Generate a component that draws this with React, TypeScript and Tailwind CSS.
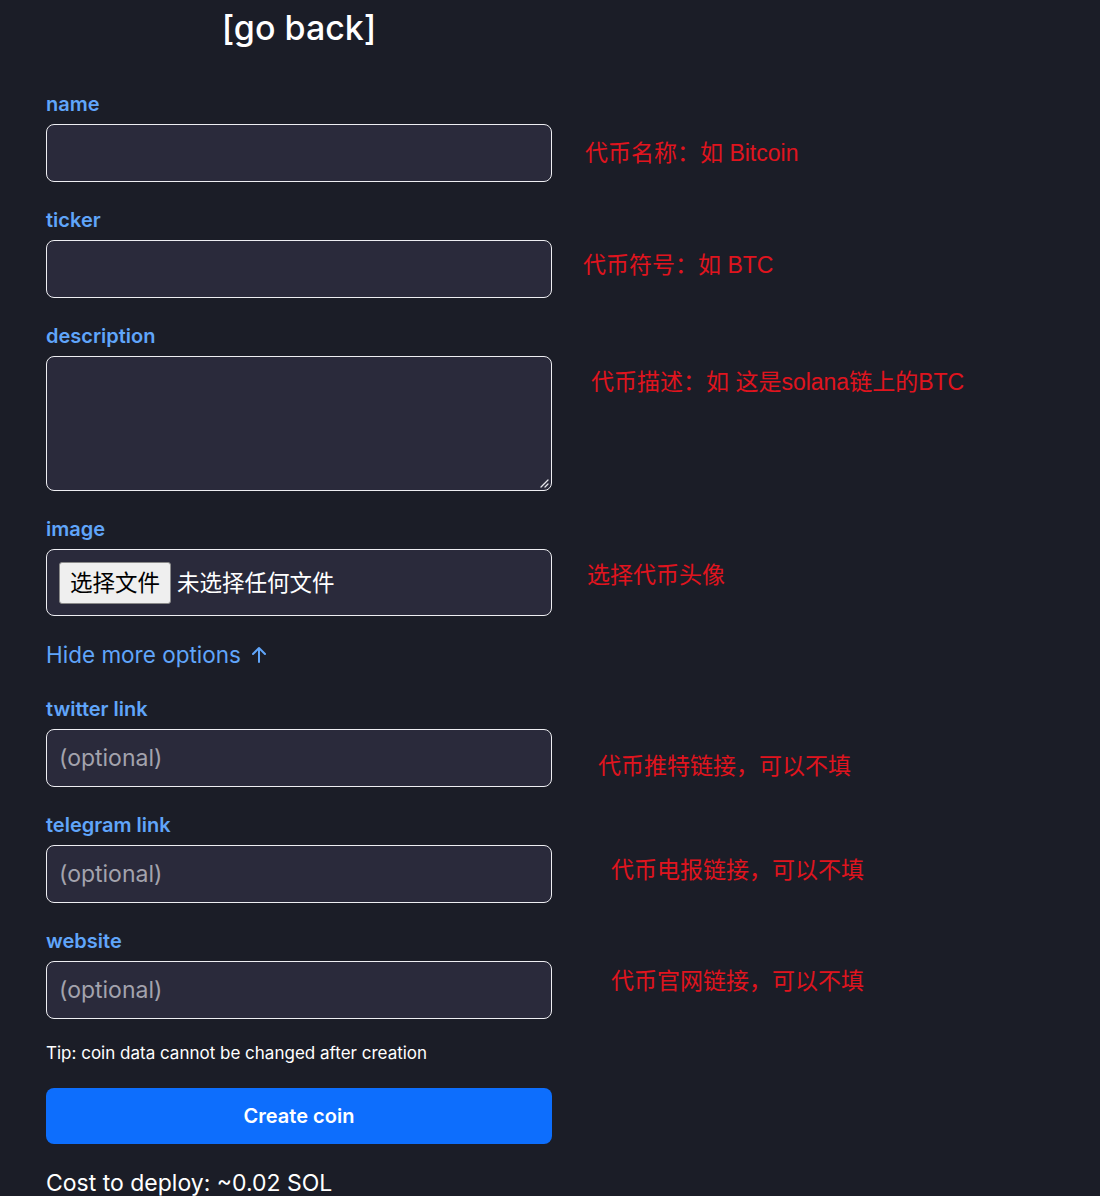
import React from 'react';

const font = { fontFamily: 'Inter, "Noto Sans CJK SC", sans-serif' };

const Note = ({ text, className }: { text: string; className: string }) => (
  <div
    className={`text-[23px] leading-[30px] text-[#e0141e] whitespace-nowrap ${className}`}
    style={{ fontFamily: '"Liberation Sans", "Noto Sans CJK SC", sans-serif' }}
  >
    {text}
  </div>
);

const Label = ({ children }: { children: React.ReactNode }) => (
  <div className="h-[28px] leading-[28px] mb-[6px] text-[20px] font-semibold text-[#60a5fa]">{children}</div>
);

const inputBox =
  'w-full h-[58px] rounded-lg border-[1.5px] border-[#eeeef2] bg-[#2a2a3b] px-3 text-[23px] text-white placeholder:text-[#a3a3ad] outline-none';

const Field = ({
  label,
  placeholder,
  note,
  noteClass,
}: {
  label: string;
  placeholder?: string;
  note: string;
  noteClass: string;
}) => (
  <div className="flex">
    <div className="w-[506px] shrink-0">
      <Label>{label}</Label>
      <input className={inputBox} placeholder={placeholder} style={font} />
    </div>
    <Note text={note} className={noteClass} />
  </div>
);

export default function App() {
  return (
    <div className="min-h-[1196px] bg-[#1b1d27] text-white pl-[46px] overflow-hidden" style={font}>
      <div className="w-[506px] pt-[8px] text-center text-[34px] leading-[40px] font-medium">[go back]</div>

      <div className="mt-[42px] flex flex-col gap-[24px]">
        <Field label="name" note="代币名称：如 Bitcoin" noteClass="ml-[33px] pt-[48px]" />
        <Field label="ticker" note="代币符号：如 BTC" noteClass="ml-[31px] pt-[44px]" />

        <div className="flex">
          <div className="w-[506px] shrink-0">
            <Label>description</Label>
            <div className="relative">
              <textarea
                className="block w-full h-[135px] resize-none rounded-lg border-[1.5px] border-[#eeeef2] bg-[#2a2a3b] px-3 py-2 text-[22px] text-white outline-none"
                style={font}
              />
              <svg className="absolute right-[3px] bottom-[3px]" width="10" height="10" viewBox="0 0 10 10">
                <path d="M9 2L2 9M9 6L6 9" stroke="#e5e5ea" strokeWidth="1.3" strokeLinecap="round" />
              </svg>
            </div>
          </div>
          <Note text="代币描述：如 这是solana链上的BTC" className="ml-[39px] pt-[45px]" />
        </div>

        <div className="flex">
          <div className="w-[506px] shrink-0">
            <Label>image</Label>
            <div className="h-[67px] rounded-lg border-[1.5px] border-[#eeeef2] bg-[#2a2a3b] flex items-center pl-[12px] gap-[6px]">
              <span className="h-[42px] px-[10px] flex items-center bg-[#efefef] border border-[#8a8a8a] rounded-[3px] text-black text-[22.5px]">
                选择文件
              </span>
              <span className="text-[22.5px] text-white">未选择任何文件</span>
            </div>
          </div>
          <Note text="选择代币头像" className="ml-[35px] pt-[45px]" />
        </div>
      </div>

      <div className="mt-[25px] h-[28px] leading-[28px] text-[22.5px] text-[#60a5fa] flex items-center gap-[10px]">
        Hide more options
        <svg width="16" height="18" viewBox="0 0 16 18" fill="none">
          <path d="M8 16V2M2 8l6-6 6 6" stroke="#60a5fa" strokeWidth="2" strokeLinecap="round" strokeLinejoin="round" />
        </svg>
      </div>

      <div className="mt-[26px] flex flex-col gap-[24px]">
        <Field label="twitter link" placeholder="(optional)" note="代币推特链接，可以不填" noteClass="ml-[46px] pt-[56px]" />
        <Field label="telegram link" placeholder="(optional)" note="代币电报链接，可以不填" noteClass="ml-[59px] pt-[44px]" />
        <Field label="website" placeholder="(optional)" note="代币官网链接，可以不填" noteClass="ml-[59px] pt-[39px]" />
      </div>

      <div className="w-[506px] mt-[22px] text-[17px] leading-[24px] text-white">
        Tip: coin data cannot be changed after creation
      </div>
      <button className="mt-[23px] w-[506px] h-[56px] rounded-lg bg-[#0d6efd] text-white text-[20px] font-semibold" style={font}>
        Create coin
      </button>
      <div className="mt-[23px] text-[23px] leading-[32px] text-white">Cost to deploy: ~0.02 SOL</div>
    </div>
  );
}
